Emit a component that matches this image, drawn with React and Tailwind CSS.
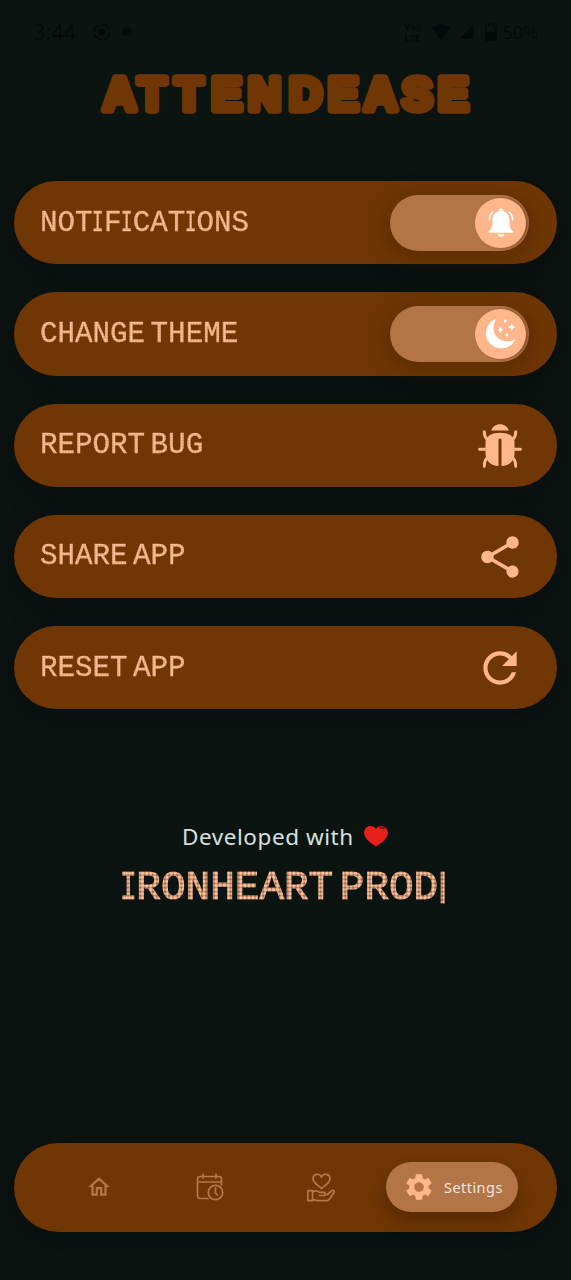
import React from 'react';
import { MdShare, MdRefresh, MdSettings } from 'react-icons/md';

const DOTS_SMALL =
  "bg-[radial-gradient(circle,#ffc8a0_42%,#d48d5c_85%)] bg-[length:2.92px_2.92px] bg-clip-text text-transparent [-webkit-text-stroke:0.4px_transparent]";
const DOTS_LARGE =
  "bg-[radial-gradient(circle,#ffc199_45%,#96694b_78%)] bg-[length:4.1px_4.1px] bg-clip-text text-transparent [-webkit-text-stroke:1.2px_transparent]";

function narrow(text, className) {
  return text.split(/(I)/).map((part, i) =>
    part === 'I' ? <span key={i} className={'inline-block scale-x-[0.68] ' + className}>I</span> : part
  );
}

function Row({ label, children }) {
  return (
    <div className="flex h-[83.25px] shrink-0 items-center justify-between rounded-full bg-[#703705] pl-[26px] pr-7 shadow-[0_8px_22px_4px_rgba(5,10,12,0.4)]">
      <span className={"whitespace-nowrap pt-0.5 font-['Liberation_Mono',monospace] text-[29.2px] leading-9 [word-spacing:-12px] " + DOTS_SMALL}>
        {narrow(label, '-mx-[3.1px] ' + DOTS_SMALL)}
      </span>
      {children}
    </div>
  );
}

function Toggle({ children }) {
  return (
    <div className="flex h-14 w-[139px] items-center justify-end rounded-full bg-[#b37446] pr-[3px] shadow-[0_5px_22px_6px_rgba(55,22,0,0.3)]">
      <div className="flex h-[50px] w-[51px] items-center justify-center rounded-full bg-[#ffb68a] shadow-[2px_0_3px_rgba(80,35,5,0.45)]">
        {children}
      </div>
    </div>
  );
}

function Bell() {
  return (
    <svg className="h-[30px] w-[28px]" viewBox="0 0 28 30" fill="white">
      <path d="M12 3.200a2.100 2.100 0 1 1 4 0c4.400 1 6.400 4.600 6.400 8.800 0 6 .8 9.200 3.800 11.600v1.200H1.800v-1.200C4.800 21.200 5.600 18 5.600 12c0-4.200 2-7.800 6.400-8.800Z" />
      <path d="M10.700 26.200h6.600c-.7 3.500-5.900 3.500-6.600 0Z" />
      <path d="M5.800 4.200C3.500 6 2.500 8.500 2.600 11.800M22.200 4.200c2.300 1.800 3.300 4.300 3.200 7.600" fill="none" stroke="white" strokeWidth="1.700" strokeLinecap="round" />
      <circle cx="14" cy="2.600" r=".6" fill="#ffb68a" />
    </svg>
  );
}

function Moon() {
  return (
    <svg className="h-[31px] w-[31px]" viewBox="0 0 31 31" fill="white">
      <path d="M11 1C6 10 9 18 14.500 21.300 19 24 25 24 30.300 21.200 27.500 27.500 22 30.500 16 30.300 7.500 30 1 23.500 1 15.500 1 8.800 5 3 11 1Z" />
      <path d="M15.300 8.800q.6 2.600 3 3.100-2.400.6-3 3.100-.6-2.500-3-3.100 2.400-.5 3-3.100ZM26.700 5.200q.7 3.200 3.800 3.900-3.100.7-3.800 3.900-.7-3.200-3.800-3.900 3.100-.7 3.800-3.900Z" />
      <circle cx="20.200" cy="3" r="1.400" />
      <circle cx="21.800" cy="17" r="1.500" />
    </svg>
  );
}

function Bug() {
  return (
    <svg className="mr-[7px] mt-px h-11 w-11" viewBox="0 0 44 44" fill="none">
      <path d="M13.300 6.600C15.500-1.800 28.500-1.800 30.700 6.600Z" fill="#ffb68a" />
      <path d="M7.500 18C7.500 5.500 36.500 5.500 36.500 18v11C36.500 37 31 42 23.500 42V16q0-1.500-1.500-1.500t-1.500 1.500v26C13 42 7.500 37 7.500 29Z" fill="#ffb68a" />
      <path d="M9.500 15.500C7 13.500 6.300 11.500 6.300 7.700M34.500 15.500C37 13.500 37.700 11.500 37.700 7.700M1.600 25.200H9M35 25.200h7.400M9 34c-2 2-2.700 4.500-2.700 8.200M35 34c2 2 2.700 4.500 2.700 8.200" stroke="#ffb68a" strokeWidth="3" strokeLinecap="round" />
    </svg>
  );
}

function StatusBar() {
  return (
    <div className="flex h-[63px] shrink-0 items-center justify-between pl-[19px] pr-[19px] font-['Open_Sans',sans-serif] text-[#040a0a]">
      <div className="flex items-center">
        <span className="w-[59px] text-[21px] leading-6 tracking-[0.5px]">3:44</span>
        <svg className="h-5 w-5" viewBox="0 0 20 20" fill="none" stroke="currentColor" strokeWidth="1.500">
          <circle cx="10" cy="10" r="7.700" strokeDasharray="9 3" />
          <circle cx="10" cy="10" r="2.500" fill="currentColor" />
        </svg>
        <svg className="ml-[9px] h-3 w-3" viewBox="0 0 12 12" fill="currentColor">
          <path d="M2 1 4 2.500h4L10 1l-.5 3L11 6l-1 4H8L6 8.500 4 10H2L1 6l1.500-2Z" />
        </svg>
      </div>
      <div className="flex items-center">
        <span className="flex w-[26px] flex-col text-[9px] font-bold leading-[11px]"><span>Vo))</span><span>LTE</span></span>
        <svg className="h-[18px] w-5" viewBox="0 0 20 18" fill="currentColor"><path d="M.5 5Q10-2.500 19.500 5L10 17Z" /></svg>
        <svg className="ml-2 h-[15px] w-[15px]" viewBox="0 0 15 15" fill="currentColor"><path d="M15 0v15H0Z" /></svg>
        <svg className="ml-[11px] h-[18px] w-3" viewBox="0 0 12 18" fill="none" stroke="currentColor" strokeWidth="1.500"><path d="M1 3h3V1h4v2h3v14H1Z" /><path d="M1 10h10v7H1Z" fill="currentColor" /></svg>
        <span className="ml-[6px] text-[18px] leading-6">50%</span>
      </div>
    </div>
  );
}

export default function App() {
  return (
    <div className="flex h-[1280px] w-[571px] flex-col overflow-hidden bg-[#0c1412] px-[14px]">
      <StatusBar />
      <h1 className="h-[62px] shrink-0">
        <svg className="h-[62px] w-[543px]" viewBox="0 0 543 62">
          <text x="89 124 161 197.500 234 275 314 350 388 424" y="46.500" fill="#703705" stroke="#703705" strokeWidth="7.500" strokeLinejoin="round" className="font-['Liberation_Sans',sans-serif] text-[45.500px] font-bold">ATTENDEASE</text>
        </svg>
      </h1>
      <main className="mt-14 flex shrink-0 flex-col gap-7">
        <Row label="NOTIFICATIONS"><Toggle><Bell /></Toggle></Row>
        <Row label="CHANGE THEME"><Toggle><Moon /></Toggle></Row>
        <Row label="REPORT BUG"><Bug /></Row>
        <Row label="SHARE APP"><MdShare className="mr-[4px] mt-px h-[50px] w-[50px] text-[#ffb68a]" /></Row>
        <Row label="RESET APP"><MdRefresh className="mr-[4px] mt-px h-[50px] w-[50px] text-[#ffb68a]" /></Row>
      </main>
      <section className="mt-[110px] flex shrink-0 flex-col items-center">
        <div className="flex h-9 items-center">
          <span className="w-[181px] whitespace-nowrap font-['Noto_Sans',sans-serif] text-[22.500px] leading-9 tracking-[0.55px] text-[#d7e0df]">Developed with</span>
          <svg className="mb-[2px] h-[23px] w-[26px]" viewBox="0 0 27 24">
            <path d="M13.500 22.500C9 19 1 14.500 1 8 1 1 9.500-1.500 13.500 4 17.500-1.500 26 1 26 8c0 6.500-8 11-12.500 14.500Z" fill="#e7201c" />
            <path d="M16.500 3.500c2.500-2 6-1.600 7.200.8M18.500 4c1.300-.8 2.600-.7 3.400.1" stroke="#35110e" strokeWidth="1" fill="none" />
          </svg>
        </div>
        <div className="mr-1 mt-2 flex items-start whitespace-nowrap">
          <span className={"font-['Liberation_Mono',monospace] text-[41px] leading-[50px] [word-spacing:-18px] " + DOTS_LARGE}>
            {narrow('IRONHEART PROD', '-mx-[4.1px] ' + DOTS_LARGE)}
          </span>
          <span className={"font-['Liberation_Sans',sans-serif] text-[34px] leading-[42px] " + DOTS_LARGE}>|</span>
        </div>
      </section>
      <nav className="mt-[229.500px] flex h-[89px] shrink-0 items-center rounded-full bg-[#703705] pl-[72px] pr-[39px] text-[#b77748] shadow-[0_8px_22px_4px_rgba(5,10,12,0.4)]">
        <svg className="h-[26px] w-[26px]" viewBox="0 0 24 24" fill="currentColor"><path d="m12 5.700 5 4.500V18h-2v-6H9v6H7v-7.800l5-4.500M12 3 2 12h3v8h6v-6h2v6h6v-8h3" /></svg>
        <svg className="ml-[84px] h-7 w-7" viewBox="0 0 28 28" fill="none" stroke="currentColor" strokeWidth="1.700">
          <path d="M12 25.500H4.500q-3 0-3-3V6q0-2.500 3-2.500h18q3 0 3 2.500v6M1.500 9h24M7 1v4M20 1v4" strokeLinecap="round" />
          <circle cx="19.500" cy="19.500" r="7.200" /><path d="M19.500 15v5l2 2" strokeLinecap="round" />
        </svg>
        <svg className="ml-[83px] h-[29px] w-7" viewBox="0 0 28 29" fill="none" stroke="currentColor" strokeWidth="1.700" strokeLinejoin="round" strokeLinecap="round">
          <path d="M14.500 15.500C11 12.500 6 9.500 6 5.700 6 .6 12.500-.3 14.500 4 16.500-.3 23 .6 23 5.700c0 3.800-5 6.800-8.500 9.800Z" />
          <path d="M.8 17.700h4.700v10H.8Zm4.700 1.300c3-1.800 5-1.300 7 .3h4c2.500 0 2.500 3.200 0 3.200h-4m5.500-.8 2.500-.2 4-3.500c1.500-1.200 3.500 0 2.400 1.500L22 26.700q-1 1-3 1h-8l-5.500-1" />
        </svg>
        <div className="ml-[51px] flex h-[50px] w-[132px] shrink-0 items-center rounded-full bg-[#b37446] pl-[17px] shadow-[0_10px_16px_2px_rgba(45,18,0,0.3)]">
          <MdSettings className="h-8 w-8 shrink-0 text-[#ffb68a]" />
          <span className="ml-[9px] font-['Noto_Sans',sans-serif] text-[14.500px] leading-5 tracking-[0.450px] text-[#f0e8e2]">Settings</span>
        </div>
      </nav>
    </div>
  );
}
